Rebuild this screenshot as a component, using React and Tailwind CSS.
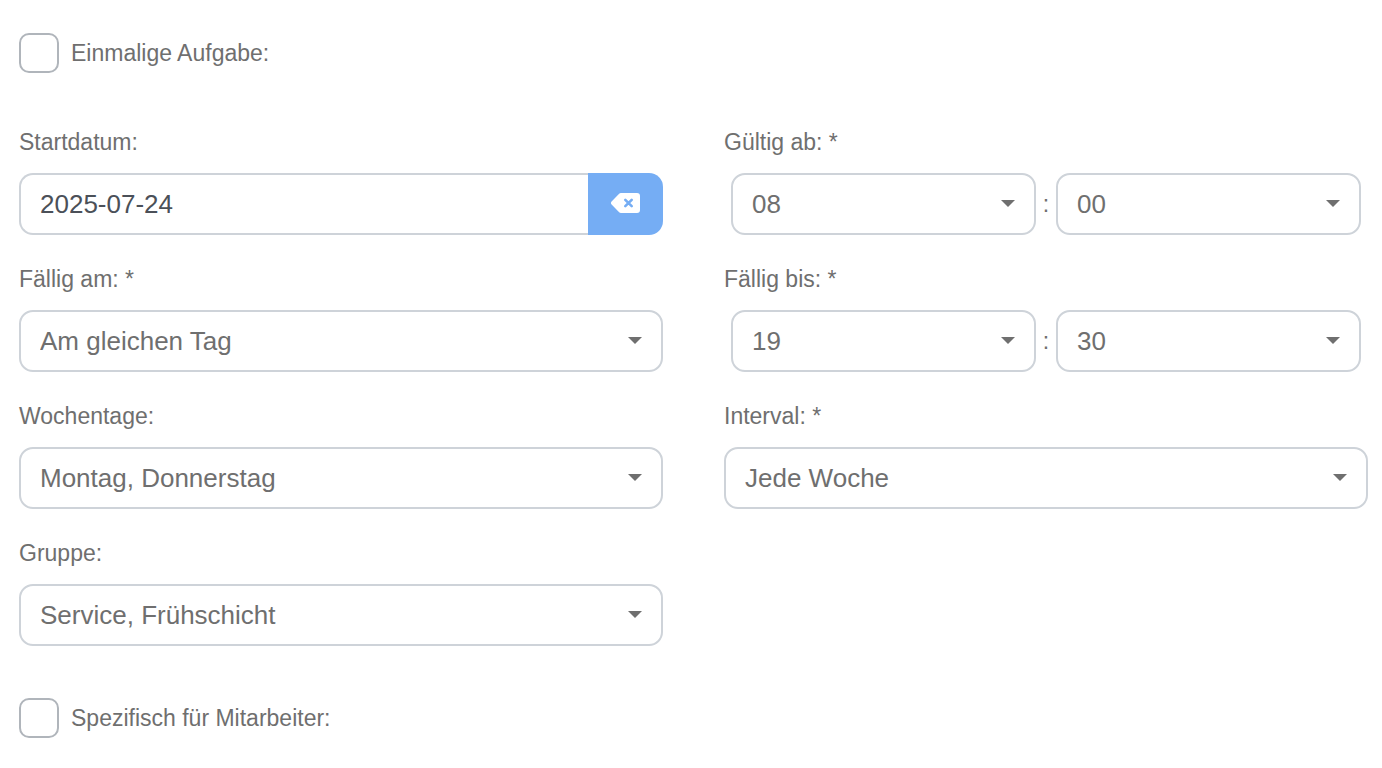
import React, { useState } from 'react';

const HOURS = Array.from({ length: 24 }, (_, i) => String(i).padStart(2, '0'));
const MINUTES = ['00', '15', '30', '45'];

function CheckField({ id, label, checked, onChange }) {
  return (
    <div className="flex items-center gap-3">
      <input
        id={id}
        type="checkbox"
        checked={checked}
        onChange={(e) => onChange(e.target.checked)}
        className="w-10 h-10 shrink-0 appearance-none rounded-[10px] border-2 border-[#b0b5bb] bg-white checked:bg-[#75adf4] cursor-pointer"
      />
      <label htmlFor={id} className="text-[23px] leading-8 cursor-pointer">{label}</label>
    </div>
  );
}

function Select({ id, value, onChange, options, ariaLabel }) {
  return (
    <div className="relative flex-1 min-w-0">
      <select
        id={id}
        value={value}
        aria-label={ariaLabel}
        onChange={(e) => onChange(e.target.value)}
        className="block w-full h-[62px] appearance-none rounded-[14px] border-2 border-[#ced3d9] bg-white pl-[19px] pr-12 text-[26px] cursor-pointer"
      >
        {options.map((option) => (
          <option key={option} value={option}>{option}</option>
        ))}
      </select>
      <svg className="absolute right-[21px] top-[27px] w-[14px] h-[7px] pointer-events-none" viewBox="0 0 14 7">
        <path d="M0 0h14L7 7z" fill="currentColor" />
      </svg>
    </div>
  );
}

function Field({ id, label, children }) {
  return (
    <div className="flex flex-col gap-[15px]">
      <label htmlFor={id} className="text-[23px] leading-8">{label}</label>
      {children}
    </div>
  );
}

function TimeField({ id, label, hour, minute, onHour, onMinute }) {
  return (
    <Field id={id} label={label}>
      <div className="flex items-center px-[7px]">
        <Select id={id} value={hour} onChange={onHour} options={HOURS} />
        <span className="w-5 text-center text-[23px]">:</span>
        <Select value={minute} onChange={onMinute} options={MINUTES} ariaLabel={`${label} Minuten`} />
      </div>
    </Field>
  );
}

export default function App() {
  const [form, setForm] = useState({
    once: false,
    start: '2025-07-24',
    fromHour: '08',
    fromMinute: '00',
    due: 'Am gleichen Tag',
    dueHour: '19',
    dueMinute: '30',
    weekdays: 'Montag, Donnerstag',
    interval: 'Jede Woche',
    group: 'Service, Frühschicht',
    employee: false,
  });

  const set = (key) => (value) => setForm((prev) => ({ ...prev, [key]: value }));

  return (
    <form className="bg-white pl-[19px] pr-[14px] pt-[33px] pb-7 text-[#6f6f6f] font-['Liberation_Sans',Arial,sans-serif]">
      <CheckField id="once" label="Einmalige Aufgabe:" checked={form.once} onChange={set('once')} />

      <div className="grid grid-cols-2 gap-x-[61px] gap-y-7 mt-[53px] mb-[52px]">
        <Field id="start" label="Startdatum:">
          <div className="flex h-[62px]">
            <input
              id="start"
              type="text"
              value={form.start}
              onChange={(e) => set('start')(e.target.value)}
              className="flex-1 min-w-0 rounded-l-[14px] border-2 border-r-0 border-[#ced3d9] bg-white px-[19px] text-[26px] text-[#4b5058]"
            />
            <button
              type="button"
              aria-label="Datum löschen"
              onClick={() => set('start')('')}
              className="w-[75px] flex items-center justify-center rounded-r-[14px] bg-[#75adf4] pb-0.5 text-white cursor-pointer"
            >
              <svg className="w-[29px] h-5" viewBox="0 0 29 20">
                <path d="M10 0H26a3 3 0 0 1 3 3v14a3 3 0 0 1-3 3H10a3 3 0 0 1-2.100-.9L.6 11.400a2 2 0 0 1 0-2.800L7.900.9A3 3 0 0 1 10 0z" fill="currentColor" />
                <path d="M14.300 6.800l6.400 6.400M20.700 6.800l-6.400 6.400" stroke="#75adf4" strokeWidth="2.600" strokeLinecap="round" />
              </svg>
            </button>
          </div>
        </Field>
        <TimeField
          id="valid-from"
          label="Gültig ab: *"
          hour={form.fromHour}
          minute={form.fromMinute}
          onHour={set('fromHour')}
          onMinute={set('fromMinute')}
        />

        <Field id="due" label="Fällig am: *">
          <Select id="due" value={form.due} onChange={set('due')} options={['Am gleichen Tag', 'Am nächsten Tag']} />
        </Field>
        <TimeField
          id="due-until"
          label="Fällig bis: *"
          hour={form.dueHour}
          minute={form.dueMinute}
          onHour={set('dueHour')}
          onMinute={set('dueMinute')}
        />

        <Field id="weekdays" label="Wochentage:">
          <Select id="weekdays" value={form.weekdays} onChange={set('weekdays')} options={['Montag, Donnerstag']} />
        </Field>
        <Field id="interval" label="Interval: *">
          <Select id="interval" value={form.interval} onChange={set('interval')} options={['Jede Woche', 'Jede zweite Woche']} />
        </Field>

        <Field id="group" label="Gruppe:">
          <Select id="group" value={form.group} onChange={set('group')} options={['Service, Frühschicht']} />
        </Field>
      </div>

      <CheckField id="employee" label="Spezifisch für Mitarbeiter:" checked={form.employee} onChange={set('employee')} />
    </form>
  );
}
